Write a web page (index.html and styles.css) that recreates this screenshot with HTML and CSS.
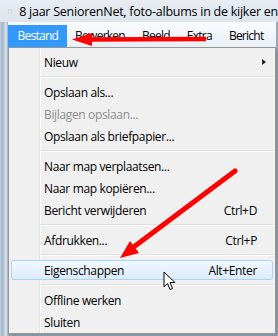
FILE: index.html
```html
<!DOCTYPE html>
<html>

<head>
    <title>Windows Mail - Bestand</title>
    <link rel="stylesheet" href="styles.css">
</head>

<body>
    <div class="window">
        <div class="titlebar">
            <svg class="mail-icon" width="14" height="11" viewBox="0 0 14 11">
                <rect x="0.5" y="0.5" width="13" height="10" fill="#f6f6f6" stroke="#a3a9b0" />
                <path d="M0.5 0.5 L7 6 L13.5 0.5" fill="none" stroke="#a3a9b0" />
                <path d="M0.5 10.5 L5 5.5 M13.5 10.5 L9 5.5" fill="none" stroke="#c4c9ce" />
            </svg>
            <span class="title-text">8 jaar SeniorenNet, foto-albums in de kijker en</span>
        </div>
        <div class="menubar">
            <span class="menubar-item active">Bestand</span>
            <span class="menubar-item">Bewerken</span>
            <span class="menubar-item">Beeld</span>
            <span class="menubar-item">Extra</span>
            <span class="menubar-item">Bericht</span>
        </div>
        <div class="menu">
            <div class="menu-item has-sub"><span>Nieuw</span><span class="sub-arrow"></span></div>
            <div class="separator"></div>
            <div class="menu-item"><span>Opslaan als...</span></div>
            <div class="menu-item disabled"><span>Bijlagen opslaan...</span></div>
            <div class="menu-item"><span>Opslaan als briefpapier...</span></div>
            <div class="separator"></div>
            <div class="menu-item"><span>Naar map verplaatsen...</span></div>
            <div class="menu-item"><span>Naar map kopiëren...</span></div>
            <div class="menu-item"><span>Bericht verwijderen</span><span class="shortcut">Ctrl+D</span></div>
            <div class="separator"></div>
            <div class="menu-item"><span>Afdrukken...</span><span class="shortcut">Ctrl+P</span></div>
            <div class="separator"></div>
            <div class="menu-item hover"><span>Eigenschappen</span><span class="shortcut">Alt+Enter</span></div>
            <div class="separator"></div>
            <div class="menu-item"><span>Offline werken</span></div>
            <div class="menu-item"><span>Sluiten</span></div>
        </div>
    </div>

    <!-- red arrows drawn over the screenshot -->
    <svg class="annotations" width="278" height="336" viewBox="0 0 278 336">
        <line x1="206" y1="39" x2="86" y2="39.5" stroke="#ff0000" stroke-width="4.5" />
        <polygon points="72,39.5 92,33 92,46" fill="#ff0000" />
        <line x1="235" y1="171" x2="131" y2="249" stroke="#ff0000" stroke-width="5" stroke-linecap="round" />
        <polygon points="120,258 130,241 139,253" fill="#ff0000" />
    </svg>

    <svg class="cursor" width="13" height="21" viewBox="0 0 13 21">
        <path d="M1 1 L1 16 L4.5 12.5 L7 18.5 L9.5 17.5 L7 11.5 L12 11.5 Z" fill="#fff" stroke="#000" stroke-width="1" stroke-linejoin="round" />
    </svg>
</body>

</html>
```

FILE: styles.css
```css
body {
    margin: 0;
    width: 278px;
    height: 336px;
    overflow: hidden;
    position: relative;
    font-family: "Open Sans", "Noto Sans", sans-serif;
    font-size: 12px;
    letter-spacing: -0.35px;
    color: #000;
    background: linear-gradient(to right, #c7d3e0 0, #9fb3c9 2px, #b9c8d8 4px, #dfe6ee 6px, #9aa8b8 8px);
}

.titlebar {
    height: 22px;
    display: flex;
    align-items: center;
    gap: 7px;
    padding-left: 8px;
    white-space: nowrap;
    overflow: hidden;
    background: linear-gradient(#e8edf3, #dce4ed);
}

.title-text {
    font-size: 12.5px;
    letter-spacing: -0.25px;
}

.menubar {
    display: flex;
    height: 25px;
    box-sizing: border-box;
    padding-top: 3px;
    margin: 0 2px 0 8px;
    letter-spacing: -0.75px;
    background: linear-gradient(#fbfcfe, #e9eef6);
}

.menubar-item {
    padding: 0 8.5px;
    line-height: 22px;
}

.menubar-item.active {
    padding: 0 8.5px 0 9.5px;
    background-color: #3399ff;
    color: #fff;
}

.menu {
    margin-left: 8px;
    width: 268px;
    box-sizing: border-box;
    border: 1px solid #979797;
    padding: 3px 2px 0;
    background-color: #f0f0f0;
    background-image: linear-gradient(to right, transparent 30px, #e2e3e3 30px, #e2e3e3 31px, #fff 31px, #fff 32px, transparent 32px);
    box-shadow: 2px 2px 2px rgba(0, 0, 0, 0.15);
}

.menu-item {
    height: 22px;
    box-sizing: border-box;
    display: flex;
    align-items: center;
    justify-content: space-between;
    padding: 0 16px 0 33px;
    white-space: nowrap;
}

.menu-item.has-sub {
    padding-right: 7px;
}

.sub-arrow {
    width: 0;
    height: 0;
    border-left: 4px solid #222;
    border-top: 3.5px solid transparent;
    border-bottom: 3.5px solid transparent;
}

.menu-item.disabled {
    color: #8d8d8d;
}

.menu-item.hover {
    height: 20px;
    margin: 1px 0;
    padding: 0 15px 0 32px;
    border: 1px solid #a9d3f2;
    border-radius: 3px;
    background: linear-gradient(#f2f8fe, #dcebfc);
}

.separator {
    height: 8px;
    margin-left: 29px;
    background: linear-gradient(transparent 3px, #e0e0e0 3px, #e0e0e0 4px, #fff 4px, #fff 5px, transparent 5px);
}

.annotations {
    position: absolute;
    top: 0;
    left: 0;
    pointer-events: none;
}

.cursor {
    position: absolute;
    left: 163px;
    top: 271px;
}
```
